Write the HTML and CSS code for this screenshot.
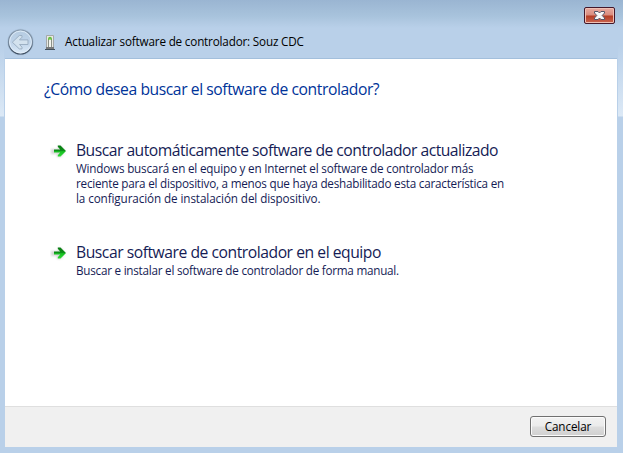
FILE: index.html
```html
<!DOCTYPE html>
<html lang="es">
<head>
<meta charset="utf-8">
<title>Actualizar software de controlador</title>
<link rel="stylesheet" href="styles.css">
</head>
<body>
<div class="window">
  <header class="titlebar">
    <div class="caption">
      <button class="close" aria-label="Cerrar">
        <svg width="13" height="11" viewBox="0 0 13 11"><path d="M1.500 1.500h3.500L6.500 3 8 1.500h3.500v1.500L9.200 5.500l2.300 2.500v1.500H8L6.500 8 5 9.500H1.500V8l2.300-2.500L1.500 3z" fill="#f7f7f7" stroke="#54566a" stroke-width="1"/></svg>
      </button>
    </div>
    <div class="nav">
      <svg class="back" width="28" height="28" viewBox="0 0 28 28">
        <defs>
          <linearGradient id="disc" x1="0" y1="0" x2="0" y2="1"><stop offset="0" stop-color="#b5cbe0"/><stop offset=".5" stop-color="#bed3e9"/><stop offset="1" stop-color="#dcebf8"/></linearGradient>
          <linearGradient id="rim" x1="0" y1="0" x2="0" y2="1"><stop offset="0" stop-color="#8799ac"/><stop offset=".55" stop-color="#74879c"/><stop offset="1" stop-color="#3d4d60"/></linearGradient>
        </defs>
        <circle cx="13.500" cy="14" r="13.300" fill="#9eb6cf" opacity=".45"/>
        <circle cx="13.500" cy="14" r="12" fill="url(#disc)" stroke="url(#rim)" stroke-width="1.200"/>
        <circle cx="13.500" cy="14" r="10.900" fill="none" stroke="#e6f1fb" stroke-width="1" opacity=".8"/>
        <path d="M5.300 14.200l7-6.700h2.700v1.700l-2.500 2.700h8.500v4.600h-8.500l2.500 2.700v1.700h-2.700z" fill="#d3e2ee" stroke="#9cb0c4" stroke-width="1" stroke-linejoin="round"/>
      </svg>
      <svg class="device" width="12" height="16" viewBox="0 0 12 16">
        <path d="M2.500 .5h7v12.500h-7z" fill="#e9e9e4" stroke="#a4a8a9"/>
        <path d="M4.500 13V5q0-2 1.500-2t1.500 2v8" fill="#f2f3ee" stroke="#8b9188"/>
        <path d="M4.800 5V4q0-1.500 1.200-1.500T7.200 4v1" fill="none" stroke="#67c13c" stroke-width="1.500"/>
        <path d="M2 12h8v2H2z" fill="#77797a"/><path d="M1 14h10v1H1z" fill="#42505c"/>
      </svg>
      <span class="title">Actualizar software de controlador: Souz CDC</span>
    </div>
  </header>
  <main class="page">
    <h1 class="heading">¿Cómo desea buscar el software de controlador?</h1>
    <section class="command command-auto">
      <svg class="arrow" width="18" height="16" viewBox="0 0 18 16">
        <defs><linearGradient id="green" x1="0" y1="0" x2="0" y2="1"><stop offset="0" stop-color="#087c12"/><stop offset=".5" stop-color="#0c8f17"/><stop offset=".55" stop-color="#17bd22"/><stop offset="1" stop-color="#2ddc35"/></linearGradient>
        <filter id="soft" x="-50%" y="-50%" width="200%" height="200%"><feGaussianBlur stdDeviation="1.300"/></filter></defs>
        <path d="M1 6h7V3h3l4 5-4 6H7v-3H1z" fill="#999" opacity=".4" filter="url(#soft)"/>
        <path d="M4 6.500h6.200L7.800 3.800V2.500h2.700L16 8l-5.500 5.500H7.800v-1.300l2.400-2.700H4z" fill="url(#green)"/>
      </svg>
      <div class="copy">
        <h2 class="link link-auto">Buscar automáticamente software de controlador actualizado</h2>
        <p class="note"><span class="line line-a">Windows buscará en el equipo y en Internet el software de controlador más</span> <span class="line line-b">reciente para el dispositivo, a menos que haya deshabilitado esta característica en</span> <span class="line line-c">la configuración de instalación del dispositivo.</span></p>
      </div>
    </section>
    <section class="command">
      <svg class="arrow" width="18" height="16" viewBox="0 0 18 16">
        <path d="M1 6h7V3h3l4 5-4 6H7v-3H1z" fill="#999" opacity=".4" filter="url(#soft)"/>
        <path d="M4 6.500h6.200L7.800 3.800V2.500h2.700L16 8l-5.500 5.500H7.800v-1.300l2.400-2.700H4z" fill="url(#green)"/>
      </svg>
      <div class="copy">
        <h2 class="link link-manual">Buscar software de controlador en el equipo</h2>
        <p class="note"><span class="line line-d">Buscar e instalar el software de controlador de forma manual.</span></p>
      </div>
    </section>
  </main>
  <footer class="actions"><button class="cancel">Cancelar</button></footer>
</div>
</body>
</html>
```

FILE: styles.css
```css
* { box-sizing: border-box; }
body { margin: 0; font: 11.7px/15px "Open Sans", "Noto Sans", sans-serif; }
h1, h2, p { margin: 0; font-weight: 400; }
svg { display: block; flex: none; }
.window {
  width: 623px; height: 453px; padding: 0 6px 6px 5px;
  display: flex; flex-direction: column;
  background:
    linear-gradient(#b9d1ea00 45px, #dce9f6 116px, #b9d1ea00 117px) left / 4px 100% no-repeat,
    linear-gradient(#b9d1ea00 45px, #dce9f6 116px, #b9d1ea00 117px) right / 5px 100% no-repeat,
    linear-gradient(#9ab5d2, #a8c3dc 16px, #b9d0e9 28px, #b9d0e9);
}
.titlebar { height: 59px; border-bottom: 1px solid #a3bfdc; }
.caption { height: 28px; padding: 7px 2px 0 0; display: flex; justify-content: flex-end; }
.close {
  width: 31px; height: 17px; padding: 0; display: flex; align-items: center; justify-content: center;
  border: 1px solid #43172a; border-radius: 2px;
  background: linear-gradient(#e8aaa0, #d98b7d 48%, #b43d24 52%, #c96450);
  box-shadow: inset 0 0 0 1px #efc0b4;
}
.nav { height: 28px; padding-left: 2px; display: flex; align-items: center; }
.device { margin: 2px 0 0 9px; }
.title { margin: 0 0 2px 9px; color: #000; white-space: nowrap; letter-spacing: -.175px; }
.page { flex: 1; background: #fff; padding: 20px 0 0 39px; white-space: nowrap; }
.heading { font-size: 15.7px; line-height: 20px; color: #003399; letter-spacing: -.435px; }
.command { display: flex; margin-left: 6px; color: #151c55; }
.command-auto { margin: 41px 0 36px 6px; }
.arrow { margin-top: 3px; }
.copy { margin-left: 8px; }
.link { font-size: 15.7px; line-height: 20px; }
.link-auto { letter-spacing: -.51px; }
.link-manual { letter-spacing: -.465px; }
.note { margin-top: 1px; line-height: 15px; }
.line { display: block; }
.line-a { letter-spacing: -.2px; }
.line-b { letter-spacing: -.225px; }
.line-c { letter-spacing: -.1px; }
.line-d { letter-spacing: -.24px; }
.actions { height: 41px; border-top: 1px solid #dfdfdf; background: #f0f0f0; display: flex; justify-content: flex-end; padding: 9px 11px 0 0; }
.cancel {
  width: 76px; height: 21px; padding: 0; border: 1px solid #707070; border-radius: 3px;
  background: linear-gradient(#f2f2f2, #ebebeb 48%, #dddddd 52%, #cfcfcf);
  box-shadow: inset 0 0 0 1px #fbfbfb; font: inherit; letter-spacing: -.1px; color: #000;
}
```
